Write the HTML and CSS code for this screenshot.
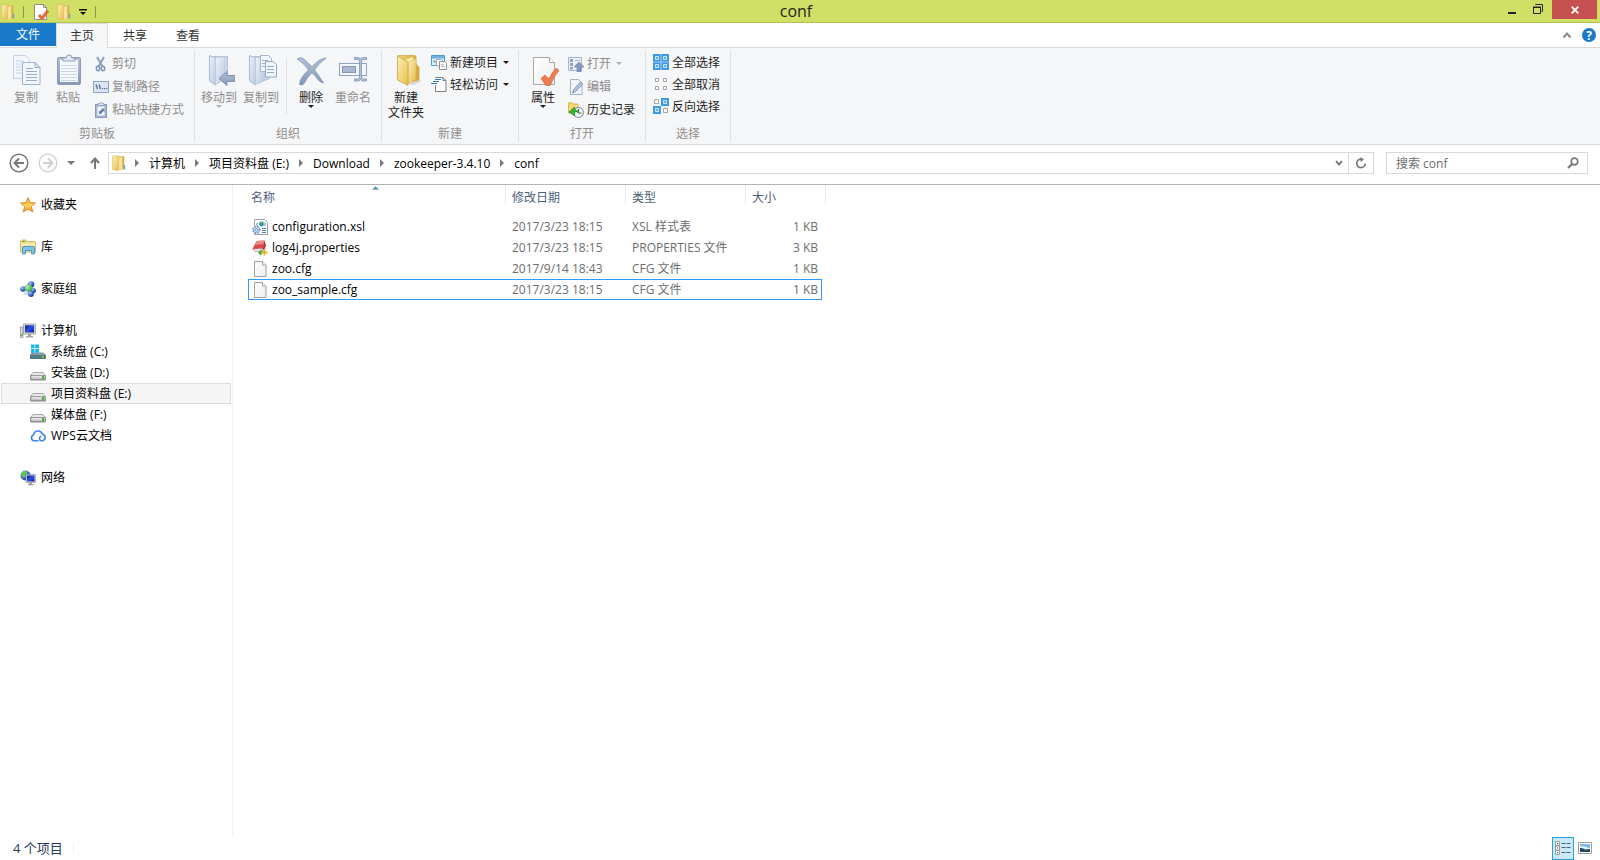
FILE: index.html
```html
<!DOCTYPE html>
<html lang="zh-CN">
<head>
<meta charset="utf-8">
<title>conf</title>
<link rel="stylesheet" href="styles.css">
</head>
<body>
<svg class="defs" aria-hidden="true">
  <defs>
    <linearGradient id="gold" x1="0" y1="0" x2="1" y2="1"><stop offset="0" stop-color="#fdf0b4"/><stop offset="1" stop-color="#e6be4c"/></linearGradient>
    <linearGradient id="goldDark" x1="0" y1="0" x2="1" y2="0"><stop offset="0" stop-color="#efd27c"/><stop offset="1" stop-color="#d4a638"/></linearGradient>
    <linearGradient id="steel" x1="0" y1="0" x2="1" y2="1"><stop offset="0" stop-color="#eef3fa"/><stop offset="1" stop-color="#b9c8de"/></linearGradient>
    <linearGradient id="steelDark" x1="0" y1="0" x2="0" y2="1"><stop offset="0" stop-color="#b4c1d6"/><stop offset="1" stop-color="#8497b8"/></linearGradient>
    <linearGradient id="paper" x1="0" y1="0" x2="1" y2="1"><stop offset="0" stop-color="#ffffff"/><stop offset="1" stop-color="#eeeeee"/></linearGradient>
    <linearGradient id="drive" x1="0" y1="0" x2="0" y2="1"><stop offset="0" stop-color="#f4f4f4"/><stop offset="1" stop-color="#b4b4b4"/></linearGradient>
    <linearGradient id="star" x1="0" y1="0" x2="0" y2="1"><stop offset="0" stop-color="#f7a21c"/><stop offset=".55" stop-color="#ffd65c"/><stop offset="1" stop-color="#f08a1c"/></linearGradient>
    <radialGradient id="blueBall" cx=".35" cy=".3" r=".8"><stop offset="0" stop-color="#b9cff5"/><stop offset=".5" stop-color="#3f66cc"/><stop offset="1" stop-color="#1b348f"/></radialGradient>
    <radialGradient id="greenBall" cx=".35" cy=".3" r=".8"><stop offset="0" stop-color="#b4f0a4"/><stop offset="1" stop-color="#1f9438"/></radialGradient>
    <linearGradient id="screen" x1="0" y1="0" x2="1" y2="1"><stop offset="0" stop-color="#0a1690"/><stop offset=".5" stop-color="#2c50e0"/><stop offset="1" stop-color="#0c1a9a"/></linearGradient>
  </defs>
  <symbol id="folder" viewBox="0 0 16 16">
    <path d="M6 1.500h7v12.500l-6 1z" fill="url(#goldDark)" stroke="#dcb85a" stroke-width=".6"/>
    <path d="M1.500 1l4.500-.5 1.800 2.300v12l-1.800 .7-4.500-1z" fill="url(#gold)" stroke="#dfbe68" stroke-width=".6"/>
    <path d="M8 3l3.300-1.500v12.500L8 15.500z" fill="#f6e29a"/>
    <path d="M13.500 10v4.500" stroke="#4ba3de" stroke-width="1.200"/>
  </symbol>
  <symbol id="doc-check" viewBox="0 0 16 16">
    <path d="M1.500.5h9l3 3v12h-12z" fill="#fff" stroke="#8f8f8f"/>
    <path d="M10.500.5v3h3" fill="none" stroke="#8f8f8f"/>
    <path d="M6 11l3 3.500L15 6.500" fill="none" stroke="#e4693c" stroke-width="3"/>
  </symbol>
  <symbol id="drive-disk" viewBox="0 0 16 16">
    <path d="M3 7.500h10l2.500 3v4q0 .5-.5.500H1q-.5 0-.5-.5v-4z" fill="#e8e8e8" stroke="#909090" stroke-width=".8"/>
    <path d="M.8 10.500h14.400v4.200H.8z" fill="url(#drive)" stroke="#777" stroke-width=".7"/>
    <rect x="12" y="11" width="2" height="3" fill="#43b432"/>
  </symbol>
  <symbol id="page" viewBox="0 0 16 16">
    <path d="M2.500.5h8l3.500 3.500v11.500h-11.500z" fill="url(#paper)" stroke="#a0a0a0"/>
    <path d="M10.500.5v3.500h3.500" fill="#fff" stroke="#a0a0a0"/>
  </symbol>
  <symbol id="crumb" viewBox="0 0 6 8"><path d="M1 0l4 4-4 4z" fill="#7a7a7a"/></symbol>
  <symbol id="down" viewBox="0 0 6 3"><path d="M0 0h6L3 3z" fill="currentColor"/></symbol>
</svg>

<header class="titlebar">
  <div class="quick">
    <svg class="i16"><use href="#folder"/></svg>
    <span class="quick-sep"></span>
    <button class="plain" aria-label="属性"><svg class="i16"><use href="#doc-check"/></svg></button>
    <button class="plain" aria-label="新建文件夹"><svg class="i16"><use href="#folder"/></svg></button>
    <button class="plain" aria-label="自定义快速访问工具栏"><svg width="8" height="8" viewBox="0 0 8 8"><path d="M0 1h8v1.500H0zM1 4h6L4 7z" fill="#111"/></svg></button>
    <span class="quick-sep"></span>
  </div>
  <h1 class="title">conf</h1>
  <div class="controls">
    <button class="control" aria-label="最小化"><svg width="12" height="12" viewBox="0 0 12 12"><path d="M2 8h8v2H2z" fill="#222"/></svg></button>
    <button class="control" aria-label="还原"><svg width="12" height="12" viewBox="0 0 12 12"><path d="M3.500 1v-.5h7v7h-1" fill="none" stroke="#222"/><path d="M1.500 3.500h7v6h-7z" fill="none" stroke="#222"/><path d="M1 2.500h8v1.500H1z" fill="#222"/></svg></button>
    <button class="control close" aria-label="关闭"><svg width="8" height="8" viewBox="0 0 8 8"><path d="M.7.7l6.600 6.600M7.300.7L.7 7.300" stroke="#fff" stroke-width="1.800"/></svg></button>
  </div>
</header>

<nav class="tabs">
  <button class="tab file">文件</button>
  <button class="tab active">主页</button>
  <button class="tab">共享</button>
  <button class="tab">查看</button>
  <span class="grow"></span>
  <button class="plain" aria-label="最小化功能区"><svg width="10" height="8" viewBox="0 0 10 8"><path d="M1.500 6.500L5 2.500l3.500 4" fill="none" stroke="#8a8a8a" stroke-width="2"/></svg></button>
  <button class="plain help" aria-label="帮助">?</button>
</nav>

<section class="ribbon">
  <div class="group">
    <div class="group-body">
      <button class="big off">
        <svg class="i32" viewBox="0 0 32 32"><path d="M3.500 1.500h12l4 4v19h-16z" fill="#f3f7fc" stroke="#c5d2e5"/><path d="M6 7h8M6 10h8M6 13h8M6 16h8M6 19h8" stroke="#c5d2e5"/><path d="M12.500 8.500h12.500l5 5v17h-17.500z" fill="#f3f7fc" stroke="#9fb2cf"/><path d="M25 8.500v5h5z" fill="#dbe5f2" stroke="#9fb2cf"/><path d="M16 14.500h7M16 17.500h11M16 20.500h11M16 23.500h11M16 26.500h11" stroke="#9aaeca"/></svg>
        <span>复制</span>
      </button>
      <button class="big off">
        <svg class="i32" viewBox="0 0 32 32"><rect x="5.500" y="3.500" width="23" height="27" rx="1.500" fill="url(#steelDark)" stroke="#8c9dbc"/><path d="M8 6h18v22H8z" fill="#f5f8fc"/><path d="M9 11.500h16M9 14.500h16M9 17.500h16M9 20.500h16M9 23.500h16M9 26.500h16" stroke="#cbd7e8"/><path d="M11 7V4h3q0-3 3-3t3 3h3v3z" fill="#e3eaf4" stroke="#8c9dbc"/></svg>
        <span>粘贴</span>
      </button>
      <div class="list tall">
        <button class="small off"><svg class="i16" viewBox="0 0 16 16"><path d="M4 1l5.500 9.500M11 1L5.500 10.500" stroke="#8ea1c0" stroke-width="2" fill="none"/><ellipse cx="5" cy="12.500" rx="1.700" ry="2.300" fill="none" stroke="#7f94b8" stroke-width="1.500"/><ellipse cx="10" cy="12.500" rx="1.700" ry="2.300" fill="none" stroke="#7f94b8" stroke-width="1.500"/></svg>剪切</button>
        <button class="small off"><svg class="i16" viewBox="0 0 16 16"><rect x=".5" y="2.500" width="15" height="11" fill="#dbe5f1" stroke="#8fa3c3"/><path d="M3 5.500l1.500 4.500M6 5.500l1.500 4.500" stroke="#586e96" stroke-width="1.300"/><path d="M9 9h1.200v1.200H9zM11 9h1.200v1.200H11zM13 9h1.200v1.200H13z" fill="#586e96"/></svg>复制路径</button>
        <button class="small off"><svg class="i16" viewBox="0 0 16 16"><rect x="2.500" y="2.500" width="11" height="13" fill="#a7b7d0" stroke="#8598b8"/><path d="M4.500 4.500h7v9h-7z" fill="#f3f7fb"/><path d="M5 3.500v-2h1.500q1.500-2 3 0H11v2z" fill="#dde6f1" stroke="#8598b8" stroke-width=".8"/><path d="M6 12V9.500l3-2-1-1h3.500v3.500l-1-1-2.500 3z" fill="#6a80a8"/></svg>粘贴快捷方式</button>
      </div>
    </div>
    <div class="group-label">剪贴板</div>
  </div>

  <div class="group organize">
    <div class="group-body">
      <button class="big off">
        <svg class="i32" viewBox="0 0 32 32"><path d="M11 2.500h13.500v22l-12 5z" fill="#cbd7e8" stroke="#b4c2d8"/><path d="M6.500 1.500l6 2.500v27l-6-4z" fill="url(#steel)" stroke="#a9b9d1"/><path d="M12.500 4l9-1.500v23l-9 5.500z" fill="url(#steel)" stroke="#b7c6dc" stroke-width=".5"/><path d="M16 24.500l8-7v4h8v6h-8v4z" fill="url(#steelDark)" stroke="#7f92b3"/></svg>
        <span>移动到</span><svg class="drop"><use href="#down"/></svg>
      </button>
      <button class="big off">
        <svg class="i32" viewBox="0 0 32 32"><path d="M9 2.500h15.500v22l-12 5z" fill="#cbd7e8" stroke="#b4c2d8"/><path d="M4.500 1.500l6 2.500v27l-6-4z" fill="url(#steel)" stroke="#a9b9d1"/><path d="M10.500 4l9-1.500v23l-9 5.500z" fill="url(#steel)" stroke="#b7c6dc" stroke-width=".5"/><path d="M15.500 1.500h8l3 3v13h-11z" fill="#f3f7fc" stroke="#a3b4cf"/><path d="M17 6.500h6M17 9.500h6M17 12.500h6" stroke="#a3b4cf"/><path d="M20.500 7.500h8l3 3V23h-11z" fill="#f3f7fc" stroke="#94a8c8"/><path d="M22 12.500h7M22 15.500h7M22 18.500h7" stroke="#94a8c8"/></svg>
        <span>复制到</span><svg class="drop"><use href="#down"/></svg>
      </button>
      <span class="inner-sep"></span>
      <button class="big">
        <svg class="i32" viewBox="0 0 32 32"><path d="M2 5q4-3 7 0l8 8q6-8 14-9-7 5-11.500 12Q25 23 28.500 29q-3 0-6-4-3-5-6-6-5 5-7 10-2 3-5 1.500 0-4 3-8 3-4 6-6.500Q10 10 2 5z" fill="url(#steelDark)" stroke="#7d8fae" stroke-width=".7"/></svg>
        <span>删除</span><svg class="drop"><use href="#down"/></svg>
      </button>
      <button class="big off">
        <svg class="i32" viewBox="0 0 32 32"><rect x="2.500" y="9.500" width="27" height="12" fill="#f4f7fb" stroke="#8fa2c2"/><rect x="5.500" y="12.500" width="13" height="6" fill="#a8b8d2" stroke="#8397b9"/><path d="M17.500 3.500h3q2.500 0 3 1.500.5-1.500 3-1.500h3v2h-3q-2 0-2 2v15.500q0 2 2 2h3v2h-3q-2.500 0-3-1.500-.5 1.500-3 1.500h-3v-2h3q2 0 2-2V7.500q0-2-2-2h-3z" fill="#b1bfd5" stroke="#7f93b5" stroke-width=".8"/></svg>
        <span>重命名</span>
      </button>
    </div>
    <div class="group-label">组织</div>
  </div>

  <div class="group new">
    <div class="group-body">
      <button class="big">
        <svg class="i32" viewBox="0 0 32 32"><path d="M18 30l10-4 4 1-8 4z" fill="#d9d9d9"/><path d="M8 1.500h16.500q1.500 0 1.500 1.500v7l3 3v13l-8 2z" fill="url(#goldDark)" stroke="#d3ac4a" stroke-width=".8"/><path d="M14 6.500l9-3.500v24l-9 3z" fill="#fff3be"/><path d="M18 8l8-3.500v20.500l-8 5z" fill="url(#gold)" stroke="#d8b358" stroke-width=".6"/><path d="M7.500 2l10.500 6v23.500l-10.500-5.500z" fill="url(#gold)" stroke="#cfa444" stroke-width=".8"/></svg>
        <span>新建<br>文件夹</span>
      </button>
      <div class="list">
        <button class="small"><svg class="i16" viewBox="0 0 16 16"><path d="M.5 1.500h13v10H.5z" fill="#dceefa" stroke="#4c9bd1"/><path d="M1 2h12v2.500H1z" fill="#6db2e0"/><path d="M2.500 6.500h2v2h-2z" fill="#4c9bd1"/><path d="M5.500 5.500h5l1.500 1.500v5h-6.500z" fill="#fff" stroke="#999" stroke-width=".8"/><path d="M8.500 7.500h5l2 2v6h-7z" fill="#fff" stroke="#777" stroke-width=".8"/><path d="M10 10.500h3M10 12.500h4" stroke="#999" stroke-width=".7"/></svg>新建项目<svg class="drop"><use href="#down"/></svg></button>
        <button class="small"><svg class="i16" viewBox="0 0 16 16"><path d="M4.500 1.500h7.500l3 3v11H4.500z" fill="#fff" stroke="#808080"/><path d="M12 1.500v3h3" fill="none" stroke="#808080"/><path d="M2 2h8v7H0v-3z" fill="#fff"/><path d="M4 3.500h6M2 5.500h6M0 7.500h6" stroke="#2878c8"/></svg>轻松访问<svg class="drop"><use href="#down"/></svg></button>
      </div>
    </div>
    <div class="group-label">新建</div>
  </div>

  <div class="group open">
    <div class="group-body">
      <button class="big">
        <svg class="i32" viewBox="0 0 32 32"><path d="M6.500 3.500h16l5 5v22h-21z" fill="url(#paper)" stroke="#a8a8a8"/><path d="M22.500 3.500v5h5" fill="#fff" stroke="#a8a8a8"/><path d="M14 24.500l4-3.500 4 4Q25 18 29.500 14l2.500 2.500Q27 22 23 31.500h-4z" fill="#ee7c4e" stroke="#d65f30" stroke-width=".7"/></svg>
        <span>属性</span><svg class="drop"><use href="#down"/></svg>
      </button>
      <div class="list tall">
        <button class="small off"><svg class="i16" viewBox="0 0 16 16"><path d="M.5 1.500h13v13H.5z" fill="#eef3f9" stroke="#a3b3cc"/><path d="M2 3h3v3H2zM2 7h3v3H2zM2 11h3v2.500H2z" fill="#8ea2c3"/><path d="M7 4.500h5" stroke="#a3b3cc"/><path d="M6 11l5-5 5 5h-3v5H9v-5z" fill="#8599bc" stroke="#6d83a9" stroke-width=".6"/></svg>打开<svg class="drop"><use href="#down"/></svg></button>
        <button class="small off"><svg class="i16" viewBox="0 0 16 16"><path d="M2.500.5h8l3.500 3.500v11.500H2.500z" fill="#f1f5fa" stroke="#a0b1cc"/><path d="M4.500 14l1.200-3.500L12.500 3l2 2-6.800 7.500z" fill="#b4c5de" stroke="#7b90b5" stroke-width=".9"/></svg>编辑</button>
        <button class="small"><svg class="i16" viewBox="0 0 16 16"><path d="M.5 1q2-1 3.500 0l1 1h5v9H.5z" fill="#f3d873" stroke="#d1ab3c" stroke-width=".8"/><circle cx="10.500" cy="10.500" r="5" fill="#eef2f4" stroke="#7d8a92"/><path d="M10.500 7v4h3" fill="none" stroke="#444" stroke-width=".9"/><path d="M1 10L6.500 5v2.800q3.500 0 4 3-2-1.600-4-1v4z" fill="#35b52c" stroke="#1c8420" stroke-width=".6"/></svg>历史记录</button>
      </div>
    </div>
    <div class="group-label">打开</div>
  </div>

  <div class="group select">
    <div class="group-body">
      <div class="list">
        <button class="small"><svg class="i16" viewBox="0 0 16 16"><path d="M0 0h7.700v7.700H0zM8.300 0H16v7.700H8.300zM0 8.300h7.700V16H0zM8.300 8.300H16V16H8.300z" fill="#3f9bea"/><path d="M2.500 2.500h3v3h-3zM10.500 2.500h3v3h-3zM2.500 10.500h3v3h-3zM10.500 10.500h3v3h-3z" fill="#5aabee" stroke="#cfe7fb"/></svg>全部选择</button>
        <button class="small"><svg class="i16" viewBox="0 0 16 16"><path d="M2.500 2.500h3v3h-3zM10.500 2.500h3v3h-3zM2.500 10.500h3v3h-3zM10.500 10.500h3v3h-3z" fill="#fff" stroke="#a2a2a2"/></svg>全部取消</button>
        <button class="small"><svg class="i16" viewBox="0 0 16 16"><path d="M8 0h8v8H8zM0 8h8v8H0z" fill="#3f9bea"/><path d="M10.500 2.500h3v3h-3zM2.500 10.500h3v3h-3z" fill="#5aabee" stroke="#cfe7fb"/><path d="M1.500 1.500h4v4h-4zM10.500 10.500h4v4h-4z" fill="#fff" stroke="#a2a2a2"/></svg>反向选择</button>
      </div>
    </div>
    <div class="group-label">选择</div>
  </div>
</section>

<section class="addressbar">
  <button class="plain" aria-label="后退"><svg width="20" height="20" viewBox="0 0 20 20"><circle cx="10" cy="10" r="8.800" fill="none" stroke="#777" stroke-width="1.500"/><path d="M15 10H6M10 5.500L5.500 10l4.500 4.500" fill="none" stroke="#777" stroke-width="2"/></svg></button>
  <button class="plain" aria-label="前进"><svg width="20" height="20" viewBox="0 0 20 20"><circle cx="10" cy="10" r="8.800" fill="none" stroke="#cfcfcf" stroke-width="1.300"/><path d="M5 10h9M10 5.500l4.500 4.500-4.500 4.500" fill="none" stroke="#cfcfcf" stroke-width="2"/></svg></button>
  <button class="plain recent" aria-label="最近浏览的位置"><svg width="8" height="4" viewBox="0 0 6 3"><use href="#down"/></svg></button>
  <button class="plain up" aria-label="上移"><svg width="10" height="12" viewBox="0 0 10 12"><path d="M5 12V2M1 6l4-4.500L9 6" fill="none" stroke="#777" stroke-width="2"/></svg></button>
  <div class="path">
    <svg class="i16"><use href="#folder"/></svg>
    <svg class="crumb"><use href="#crumb"/></svg><a href="#computer">计算机</a>
    <svg class="crumb"><use href="#crumb"/></svg><a href="#e">项目资料盘 (E:)</a>
    <svg class="crumb"><use href="#crumb"/></svg><a href="#download">Download</a>
    <svg class="crumb"><use href="#crumb"/></svg><a href="#zookeeper">zookeeper-3.4.10</a>
    <svg class="crumb"><use href="#crumb"/></svg><a href="#conf">conf</a>
    <span class="grow"></span>
    <button class="plain path-button" aria-label="上一个位置"><svg width="8" height="8" viewBox="0 0 8 8"><path d="M1 2l3 3.500L7 2" fill="none" stroke="#707070" stroke-width="1.800"/></svg></button>
    <button class="plain path-button refresh" aria-label="刷新"><svg width="12" height="12" viewBox="0 0 12 12"><path d="M6 2.200A4.200 4.200 0 1 0 10.200 6.500" fill="none" stroke="#777" stroke-width="1.700"/><path d="M5.500 0l3.500 2.500-3.500 2.500z" fill="#777"/></svg></button>
  </div>
  <label class="search">
    <input type="text" placeholder="搜索 conf" aria-label="搜索 conf">
    <svg width="12" height="12" viewBox="0 0 12 12"><circle cx="7.500" cy="4.500" r="3.300" fill="none" stroke="#777" stroke-width="1.700"/><path d="M5 7L1 11" stroke="#777" stroke-width="2.200"/></svg>
  </label>
</section>

<main class="main">
  <nav class="sidebar">
    <a class="node" href="#favorites"><svg class="i16" viewBox="0 0 16 16"><path d="M8 .6l2.100 5 5.400.4-4.100 3.500 1.400 5.500L8 12.100 3.200 15l1.400-5.500L.5 6l5.400-.4z" fill="url(#star)" stroke="#d57a1c" stroke-width=".8"/></svg>收藏夹</a>
    <a class="node" href="#libraries"><svg class="i16" viewBox="0 0 16 16"><path d="M.5 2.500l1-1.500h5l1 1.500h7q1 0 1 1V13H.5z" fill="#f1dd8f" stroke="#c9a94e" stroke-width=".8"/><path d="M2 2.500h3" stroke="#55a83a"/><path d="M1 5.500h14" stroke="#fff3c4" stroke-width="1.500"/><path d="M2.500 15V9q0-1.500 1.500-1.500h9q1.500 0 1.500 1.500v6h-3v-3.500h-6V15z" fill="#7cc5ea" stroke="#3a8cc0" stroke-width=".8"/></svg>库</a>
    <a class="node" href="#homegroup"><svg class="i16" viewBox="0 0 16 16"><circle cx="11" cy="3.500" r="3.300" fill="url(#blueBall)"/><circle cx="3" cy="8" r="2.800" fill="url(#blueBall)"/><circle cx="13.300" cy="9.500" r="2.600" fill="url(#blueBall)"/><circle cx="8.500" cy="7.500" r="4" fill="url(#greenBall)"/><circle cx="6" cy="12" r="2.200" fill="#cfdcf3"/><circle cx="11" cy="13" r="2.900" fill="url(#blueBall)"/></svg>家庭组</a>
    <a class="node" href="#computer"><svg class="i16" viewBox="0 0 16 16"><path d="M.5 4h2.500v10.500H.5z" fill="#d9d9d9" stroke="#888" stroke-width=".7"/><path d="M1 11h1.500v2H1z" fill="#4bb53a"/><path d="M3.500 1h12v10h-12z" fill="#d6d6d6" stroke="#8c8c8c" stroke-width=".7"/><path d="M5 2.300h9v7.200H5z" fill="url(#screen)"/><path d="M8 11h3v2h2v1.500H6V13h2z" fill="#a5a5a5"/></svg>计算机</a>
    <a class="node child" href="#c"><svg class="i16" viewBox="0 0 16 16"><path d="M2 9h11l2.500 2v3.500H.5V11z" fill="#9db3bb" stroke="#61747b" stroke-width=".8"/><path d="M.8 11h14.400v3.500H.8z" fill="#4f7f8c" stroke="#55666c" stroke-width=".6"/><path d="M12 11.500h2V14h-2z" fill="#52d23c"/><path d="M1 .5h3.500v3.700H1zM5.200.5H9v3.700H5.200zM1 5h3.500v3.700H1zM5.200 5H9v3.700H5.200z" fill="#16b5ea"/></svg>系统盘 (C:)</a>
    <a class="node child" href="#d"><svg class="i16"><use href="#drive-disk"/></svg>安装盘 (D:)</a>
    <a class="node child selected" href="#e"><svg class="i16"><use href="#drive-disk"/></svg>项目资料盘 (E:)</a>
    <a class="node child" href="#f"><svg class="i16"><use href="#drive-disk"/></svg>媒体盘 (F:)</a>
    <a class="node child" href="#wps"><svg class="i16" viewBox="0 0 16 16"><path d="M8.500 12.800H4A3 3 0 0 1 3.500 7 4.600 4.600 0 0 1 12.400 6a3.500 3.500 0 0 1 .1 6.800q-3 .2-3-2.300 0-1.700 1.800-2.200" fill="none" stroke="#3f83ec" stroke-width="1.600"/></svg>WPS云文档</a>
    <a class="node" href="#network"><svg class="i16" viewBox="0 0 16 16"><circle cx="5.500" cy="5.500" r="5" fill="url(#blueBall)"/><path d="M2 2.500q3-2.500 6-1L5.500 4.500 4 8 1 5.500z" fill="#5cc94c"/><path d="M6 4.500h9.500v8H6z" fill="#d8d8d8" stroke="#8c8c8c" stroke-width=".6"/><path d="M7 5.500h7.500v6H7z" fill="url(#screen)"/><path d="M9.500 12.500h2.500v1.500h1.500v1.300H8V14h1.500z" fill="#9a9a9a"/></svg>网络</a>
  </nav>

  <div class="files">
    <table class="file-table">
      <thead>
        <tr>
          <th class="col-name">名称<svg class="sort" viewBox="0 0 8 4"><path d="M0 4h8L4 0z" fill="#5c93b5"/></svg></th>
          <th class="col-date">修改日期</th>
          <th class="col-type">类型</th>
          <th class="col-size">大小</th>
        </tr>
      </thead>
      <tbody>
        <tr>
          <td><span class="name"><svg class="i16" viewBox="0 0 16 16"><path d="M2.500.5h10l3 3v12h-13z" fill="#fff" stroke="#8f9aa5" stroke-width=".9"/><circle cx="9.500" cy="5" r="2.400" fill="#2f8fb4"/><path d="M8 4l2-1 1 2z" fill="#6cc465"/><path d="M5.500 4l-1 1.500 1 1.500M12.500 3.500l1 1.500-1 1.500M10 9.500h4M10 11.500h4M10 13.500h4" fill="none" stroke="#3f6f9c" stroke-width=".9"/><circle cx="4.300" cy="10.800" r="3.400" fill="#c3d7ec" stroke="#7398c4" stroke-width="1.600" stroke-dasharray="1.700 1"/><circle cx="4.300" cy="10.800" r="1.200" fill="#fff" stroke="#5079ac" stroke-width=".7"/></svg>configuration.xsl</span></td>
          <td>2017/3/23 18:15</td><td>XSL 样式表</td><td>1 KB</td>
        </tr>
        <tr>
          <td><span class="name"><svg class="i16" viewBox="0 0 16 16"><path d="M4.500 1l8-.5L10.500 8.500.5 9z" fill="#d9484a"/><path d="M4.500 1l8-.5-1 3.500-8.500 1z" fill="#ee8a86"/><path d="M.5 9l10-.5.5 2.500-8 .5z" fill="#f2f2f2" stroke="#b34a48" stroke-width=".5"/><path d="M12.500.5l1.500 5-2 5-1.500-2z" fill="#b23236"/><path d="M6 12.500l3-3 2.500 2.500-3 3.500z" fill="#4cb550"/><path d="M12.500 9.500v6M9.500 12.500h6" stroke="#e6b529" stroke-width="1.800"/></svg>log4j.properties</span></td>
          <td>2017/3/23 18:15</td><td>PROPERTIES 文件</td><td>3 KB</td>
        </tr>
        <tr>
          <td><span class="name"><svg class="i16"><use href="#page"/></svg>zoo.cfg</span></td>
          <td>2017/9/14 18:43</td><td>CFG 文件</td><td>1 KB</td>
        </tr>
        <tr class="focused">
          <td><span class="name"><svg class="i16"><use href="#page"/></svg>zoo_sample.cfg</span></td>
          <td>2017/3/23 18:15</td><td>CFG 文件</td><td>1 KB</td>
        </tr>
      </tbody>
    </table>
  </div>
</main>

<footer class="status">
  <span class="count">4 个项目</span>
  <span class="grow"></span>
  <button class="plain view on" aria-label="详细信息"><svg width="16" height="14" viewBox="0 0 16 14"><path d="M.5.5h4v4h-4zM.5 5h4v4h-4zM.5 9.500h4v4h-4z" fill="#fff" stroke="#8a8a8a" stroke-width=".8"/><path d="M2 2h1.200v1.200H2z" fill="#444"/><path d="M2 6.400h1.200v1.200H2z" fill="#e02020"/><path d="M2 11h1.200v1.200H2z" fill="#2060c0"/><path d="M6.500 2.500h4M11.500 2.500h4M6.500 6.500h4M11.500 6.500h4M6.500 11.500h4M11.500 11.500h4" stroke="#4c6078"/></svg></button>
  <button class="plain view" aria-label="大图标"><svg width="14" height="12" viewBox="0 0 14 12"><path d="M.5.5h13v11H.5z" fill="#fff" stroke="#9a9a9a"/><path d="M2 2h10v8H2z" fill="#7fb9e6"/><path d="M2 4.500q4-1 10 2V10H2z" fill="#e7f2fb"/><path d="M2 6q3-.5 5 1.500l5-.5v3H2z" fill="#1d4a5c"/></svg></button>
</footer>
</body>
</html>
```
FILE: styles.css
```css
* { box-sizing: border-box; }

body {
  margin: 0;
  min-height: 100vh;
  display: flex;
  flex-direction: column;
  background: #fff;
  color: #000;
  font: 12px/15px "Open Sans", "Noto Sans CJK SC", sans-serif;
}

button, input { font: inherit; color: inherit; }
button { background: none; border: 0; padding: 0; margin: 0; }
a { color: inherit; text-decoration: none; }
svg { display: block; flex: none; }

.defs { position: absolute; width: 0; height: 0; }
.grow { flex: 1; }
.i16 { width: 16px; height: 16px; }
.i32 { width: 32px; height: 32px; }
.drop { width: 6px; height: 3px; }
.plain { display: flex; align-items: center; justify-content: center; }

/* Title bar */
.titlebar {
  display: grid;
  grid-template-columns: 1fr auto 1fr;
  height: 23px;
  padding-right: 3px;
  background: #d0df65;
  border-bottom: 1px solid #b3c14f;
}
.quick { display: flex; align-items: center; gap: 7px; padding-top: 1px; }
.quick-sep { width: 1px; height: 12px; background: #8d9748; }
.quick-sep + .plain { margin-left: 2px; }
.plain + .quick-sep { margin-left: 1px; }
.title { margin: 0 5px 0 0; font-size: 16px; font-weight: 400; line-height: 22px; color: #222; }
.controls { display: flex; justify-content: flex-end; }
.control { display: flex; align-items: center; justify-content: center; width: 26px; height: 19px; }
.control.close { width: 45px; margin-left: 1px; background: #c75050; }

/* Ribbon tabs */
.tabs {
  display: flex;
  align-items: center;
  gap: 1px;
  height: 25px;
  padding-right: 4px;
  border-bottom: 1px solid #dadbdc;
}
.tab { width: 52px; height: 24px; color: #333; }
.tab.file { width: 56px; height: 23px; margin-right: -1px; align-self: flex-start; background: #1979ca; color: #fff; }
.tab.active {
  align-self: flex-start;
  height: 25px;
  padding-bottom: 2px;
  background: #f5f6f8;
  border: 1px solid #dadbdc;
  border-bottom: 0;
}
.help {
  width: 14px;
  height: 14px;
  margin-left: 9px;
  border-radius: 50%;
  background: #1979ca;
  color: #fff;
  font-weight: 700;
}

/* Ribbon */
.ribbon {
  display: flex;
  height: 97px;
  padding: 2px 0;
  background: #f5f6f8;
  border-bottom: 1px solid #dadbdc;
}
.group {
  display: flex;
  flex-direction: column;
  padding-top: 1px;
  border-right: 1px solid #dfe1e4;
}
.group-body { display: flex; flex: 1; padding: 0 10px 0 5px; }
.organize .group-body { padding: 0 7px 0 3px; }
.new .group-body { padding: 0 9px 0 3px; }
.open .group-body { padding: 0 10px 0 3px; }
.select .group-body { padding: 0 10px 0 7px; }
.group-label { text-align: center; line-height: 16px; color: #8f8f8f; }
.big {
  display: flex;
  flex-direction: column;
  align-items: center;
  width: 42px;
  padding-top: 3px;
  white-space: nowrap;
  color: #1e1e1e;
}
.big span { margin-top: 4px; }
.off { color: #8d8d8d; }
.off .drop { color: #b0b0b0; }
.inner-sep { width: 1px; height: 55px; margin: 8px 3px 0 4px; background: #dfe1e4; }
.list { display: flex; flex-direction: column; margin-left: 4px; }
.select .list { margin-left: 0; }
.list.tall { padding-top: 1px; }
.small {
  display: flex;
  align-items: center;
  gap: 3px;
  height: 22px;
  white-space: nowrap;
  color: #1e1e1e;
}
.tall .small { height: 23px; }
.small.off { color: #8d8d8d; }
.small .drop { margin-left: 2px; }

/* Address bar */
.addressbar {
  display: flex;
  align-items: center;
  height: 40px;
  padding: 0 12px 3px 9px;
  gap: 9px;
  border-bottom: 1px solid #b4b4b4;
}
.recent { color: #777; width: 8px; }
.up { margin: 0 -1px 0 6px; }
.path {
  display: flex;
  align-items: center;
  flex: 1;
  height: 22px;
  border: 1px solid #d9d9d9;
  padding-left: 2px;
}
.path .i16 { margin-right: -2px; }
.crumb { width: 6px; height: 8px; margin: 0 8px 0 9px; }
.path a { padding-left: 1px; }
.path-button { width: 18px; height: 20px; }
.path-button.refresh { width: 25px; border-left: 1px solid #d9d9d9; }
.search {
  display: flex;
  align-items: center;
  width: 202px;
  height: 22px;
  margin-left: 3px;
  padding: 0 8px 0 9px;
  border: 1px solid #d9d9d9;
}
.search input { flex: 1; min-width: 0; border: 0; padding: 0; outline: 0; background: none; }
.search input::placeholder { color: #6d6d6d; opacity: 1; }

/* Body */
.main { display: flex; flex: 1; }
.sidebar {
  display: flex;
  flex-direction: column;
  width: 233px;
  padding: 9px 1px 0;
  border-right: 1px solid #f2f2f2;
}
.node {
  display: flex;
  align-items: center;
  gap: 5px;
  height: 21px;
  padding-left: 18px;
  border: 1px solid transparent;
}
.node:not(.child) { margin-bottom: 21px; }
.node:has(+ .child):not(.child) { margin-bottom: 0; }
.node.child { padding-left: 28px; }
.node.child:has(+ .node:not(.child)) { margin-bottom: 21px; }
.node.selected { background: #f5f5f5; border-color: #dcdcdc; }

.files { flex: 1; padding-left: 15px; }
.file-table { width: 574px; table-layout: fixed; border-collapse: separate; border-spacing: 0; }
.file-table th {
  position: relative;
  height: 31px;
  padding: 5px 6px 0 6px;
  text-align: left;
  vertical-align: top;
  font-weight: 400;
  color: #4c607a;
}
.file-table th:first-child { padding-left: 3px; }
.file-table th::after {
  content: "";
  position: absolute;
  top: 0;
  right: 0;
  width: 1px;
  height: 20px;
  background: linear-gradient(#dbe7f3, #eef3f8);
}
.file-table th.col-size::after { right: -4px; }
.col-name { width: 258px; }
.col-date, .col-type { width: 120px; }
.sort { position: absolute; top: 1px; left: 50%; width: 7px; height: 4px; margin-left: -5px; }
.file-table td {
  height: 21px;
  padding: 0 6px;
  border: 1px solid transparent;
  border-width: 1px 0;
  color: #6d6d6d;
  white-space: nowrap;
}
.file-table td:first-child { padding-left: 3px; border-left-width: 1px; color: #000; }
.file-table td:last-child { padding-right: 3px; border-right-width: 1px; text-align: right; }
.file-table .focused td { border-color: #3399ff; }
.name { display: flex; align-items: center; gap: 4px; }

/* Status bar */
.status { display: flex; align-items: center; height: 24px; padding: 0 4px 0 13px; color: #1e395b; }
.count { padding-right: 10px; border-right: 1px solid #f0f0f0; font-size: 13px; line-height: 12px; }
.view { width: 22px; height: 23px; }
.view.on { background: #cbe8f6; border: 1px solid #26a0da; }
```
